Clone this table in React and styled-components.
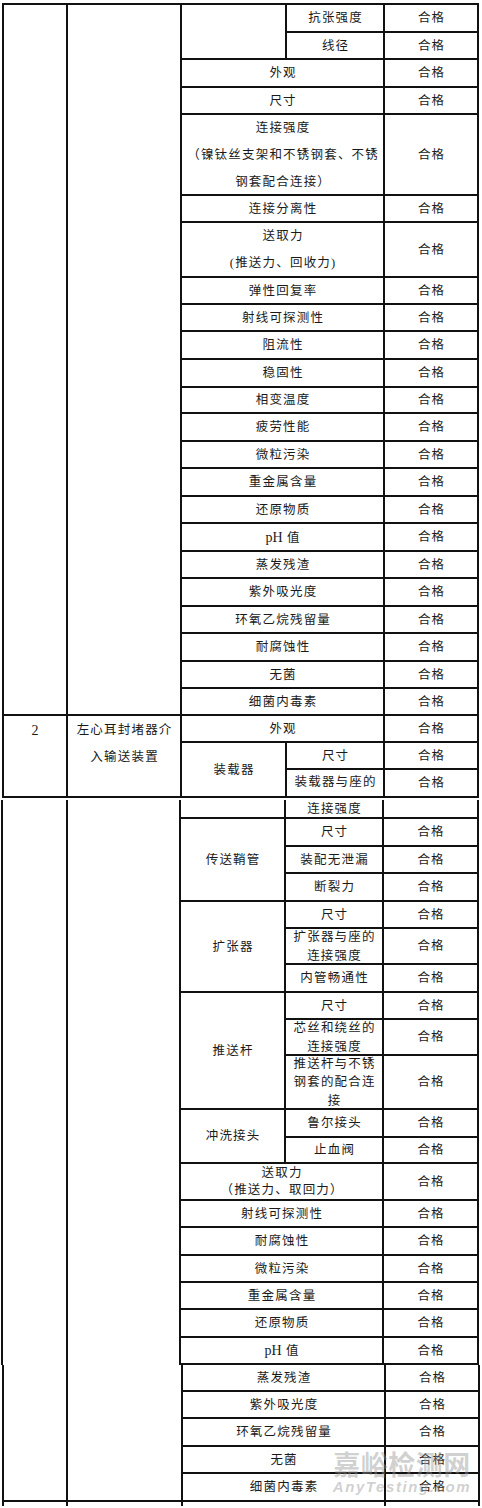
import React from 'react'
import styled, { createGlobalStyle } from 'styled-components'

const GlobalStyle = createGlobalStyle`
  html, body {
    margin: 0;
    padding: 0;
    background: #fff;
  }
  body {
    font-family: "Liberation Serif", "Noto Sans CJK SC", serif;
  }
`

const Page = styled.div`
  position: relative;
  width: 482px;
  height: 1508px;
  padding-top: 3px;
  box-sizing: border-box;
  overflow: hidden;
`

const Sheet = styled.div`
  display: grid;
  width: max-content;
  margin-left: ${p => p.$left}px;
  margin-top: ${p => p.$gap || 0}px;
  grid-template-columns: ${p => p.$cols.map(c => c + 'px').join(' ')};
  grid-template-rows: ${p => p.$rows.map(r => r + 'px').join(' ')};
  border-left: 2px solid #111;
  border-top: ${p => (p.$top ? '2px solid #111' : 'none')};
`

const Cell = styled.div`
  grid-column: ${p => p.$c} / span ${p => p.$cs || 1};
  grid-row: ${p => p.$r} / span ${p => p.$rs || 1};
  box-sizing: border-box;
  border-right: 2px solid #111;
  border-bottom: ${p => (p.$open ? 'none' : '2px solid #111')};
  display: flex;
  align-items: ${p => (p.$top ? 'flex-start' : 'center')};
  justify-content: center;
  min-width: 0;
  min-height: 0;
  overflow: hidden;
`

const Label = styled.span`
  display: block;
  text-align: center;
  font-size: 12.5px;
  letter-spacing: 1.2px;
  padding-left: 1.2px;
  padding-top: 1px;
  line-height: ${p => p.$lh || 27}px;
  color: #1a1a1a;
  white-space: nowrap;
`

const Latin = styled.span`
  font-family: "Liberation Serif", serif;
  font-size: 14px;
  letter-spacing: 0;
`

const Num = styled(Label)`
  font-size: 14px;
  letter-spacing: 0;
  padding-left: 0;
`

const Watermark = styled.div`
  position: absolute;
  left: 331px;
  top: 1448px;
  width: 142px;
  display: flex;
  flex-direction: column;
  align-items: center;
  pointer-events: none;
  color: rgba(150, 150, 150, 0.45);
`

const MarkCn = styled.div`
  font-family: "Noto Sans CJK SC", sans-serif;
  font-weight: 700;
  font-size: 27px;
  line-height: 31px;
  letter-spacing: 0.5px;
`

const MarkEn = styled.div`
  font-family: "Liberation Sans", Arial, sans-serif;
  font-style: italic;
  font-weight: 700;
  font-size: 15px;
  line-height: 16px;
  letter-spacing: 1.6px;
`

const T = ({ children, lh }) => <Label $lh={lh}>{children}</Label>

const PH = () => (
  <Label>
    <Latin>pH</Latin> 值
  </Label>
)

const pass = '合格'

const part1Rows = [28, 27, 28, 27, 81, 27, 55, 27, 27, 28, 28, 26, 28, 27, 28, 27, 28, 27, 28, 27, 28, 27, 27, 27, 27, 28]

const part1Items = [
  '外观', '尺寸', null, '连接分离性', null, '弹性回复率', '射线可探测性', '阻流性', '稳固性',
  '相变温度', '疲劳性能', '微粒污染', '重金属含量', '还原物质', 'pH', '蒸发残渣',
  '紫外吸光度', '环氧乙烷残留量', '耐腐蚀性', '无菌', '细菌内毒素',
]

const part2Rows = [19, 28, 27, 28, 27, 36, 28, 27, 36, 54, 28, 26, 37, 27, 28, 27, 27, 28, 27]

const part2Groups = [
  { name: '传送鞘管', start: 2, items: ['尺寸', '装配无泄漏', '断裂力'] },
  { name: '扩张器', start: 5, items: ['尺寸', ['扩张器与座的', '连接强度'], '内管畅通性'] },
  { name: '推送杆', start: 8, items: ['尺寸', ['芯丝和绕丝的', '连接强度'], ['推送杆与不锈', '钢套的配合连', '接']] },
  { name: '冲洗接头', start: 11, items: ['鲁尔接头', '止血阀'] },
]

const part2Tail = ['射线可探测性', '耐腐蚀性', '微粒污染', '重金属含量', '还原物质', 'pH']

const part3Items = ['蒸发残渣', '紫外吸光度', '环氧乙烷残留量', '无菌', '细菌内毒素']

const Lines = ({ lines, lh }) => (
  <Label $lh={lh}>
    {lines.map((l, i) => (
      <React.Fragment key={i}>
        {i > 0 && <br />}
        {l}
      </React.Fragment>
    ))}
  </Label>
)

const Item = ({ text }) => (text === 'pH' ? <PH /> : <T>{text}</T>)

const App = () => {
  return (
    <Page>
      <GlobalStyle />

      {/* first page fragment */}
      <Sheet $left={2} $top $cols={[64, 114, 105, 98, 94]} $rows={part1Rows}>
        <Cell $c={1} $r={1} $rs={23} />
        <Cell $c={2} $r={1} $rs={23} />
        <Cell $c={3} $r={1} $rs={2} />
        <Cell $c={4} $r={1}><T>抗张强度</T></Cell>
        <Cell $c={5} $r={1}><T>{pass}</T></Cell>
        <Cell $c={4} $r={2}><T>线径</T></Cell>
        <Cell $c={5} $r={2}><T>{pass}</T></Cell>

        {part1Items.map((item, i) => {
          const r = i + 3
          let content = <Item text={item} />
          if (r === 5) content = <Lines lines={['连接强度', '（镍钛丝支架和不锈钢套、不锈', '钢套配合连接）']} />
          if (r === 7) content = <Lines lines={['送取力', '(推送力、回收力)']} />
          return (
            <React.Fragment key={r}>
              <Cell $c={3} $cs={2} $r={r}>{content}</Cell>
              <Cell $c={5} $r={r}><T>{pass}</T></Cell>
            </React.Fragment>
          )
        })}

        <Cell $c={1} $r={24} $rs={3} $top><Num>2</Num></Cell>
        <Cell $c={2} $r={24} $rs={3} $top><Lines lines={['左心耳封堵器介', '入输送装置']} /></Cell>
        <Cell $c={3} $cs={2} $r={24}><T>外观</T></Cell>
        <Cell $c={5} $r={24}><T>{pass}</T></Cell>
        <Cell $c={3} $r={25} $rs={2}><T>装载器</T></Cell>
        <Cell $c={4} $r={25}><T>尺寸</T></Cell>
        <Cell $c={5} $r={25}><T>{pass}</T></Cell>
        <Cell $c={4} $r={26} $top><Label $lh={22}>装载器与座的</Label></Cell>
        <Cell $c={5} $r={26}><T>{pass}</T></Cell>
      </Sheet>

      {/* second page fragment */}
      <Sheet $left={1} $gap={2} $cols={[65, 113, 105, 98, 95]} $rows={part2Rows}>
        <Cell $c={1} $r={1} $rs={19} $open />
        <Cell $c={2} $r={1} $rs={19} $open />
        <Cell $c={3} $r={1} />
        <Cell $c={4} $r={1}><T lh={17}>连接强度</T></Cell>
        <Cell $c={5} $r={1} />

        {part2Groups.map(g => (
          <React.Fragment key={g.name}>
            <Cell $c={3} $r={g.start} $rs={g.items.length}><T>{g.name}</T></Cell>
            {g.items.map((it, i) => (
              <React.Fragment key={i}>
                <Cell $c={4} $r={g.start + i}>
                  {Array.isArray(it) ? <Lines lines={it} lh={18.5} /> : <T>{it}</T>}
                </Cell>
                <Cell $c={5} $r={g.start + i}><T>{pass}</T></Cell>
              </React.Fragment>
            ))}
          </React.Fragment>
        ))}

        <Cell $c={3} $cs={2} $r={13}><Lines lines={['送取力', '（推送力、取回力）']} lh={17} /></Cell>
        <Cell $c={5} $r={13}><T>{pass}</T></Cell>

        {part2Tail.map((item, i) => (
          <React.Fragment key={item}>
            <Cell $c={3} $cs={2} $r={14 + i}><Item text={item} /></Cell>
            <Cell $c={5} $r={14 + i}><T>{pass}</T></Cell>
          </React.Fragment>
        ))}
      </Sheet>

      {/* third page fragment */}
      <Sheet $left={2} $cols={[64, 115, 203, 94]} $rows={[27, 27, 28, 27, 28, 4]}>
        <Cell $c={1} $r={1} $rs={5} />
        <Cell $c={2} $r={1} $rs={5} />
        {part3Items.map((item, i) => (
          <React.Fragment key={item}>
            <Cell $c={3} $r={1 + i}><T>{item}</T></Cell>
            <Cell $c={4} $r={1 + i}><T>{pass}</T></Cell>
          </React.Fragment>
        ))}
        {[1, 2, 3, 4].map(c => (
          <Cell key={c} $c={c} $r={6} $open />
        ))}
      </Sheet>

      <Watermark>
        <MarkCn>嘉峪检测网</MarkCn>
        <MarkEn>AnyTesting.com</MarkEn>
      </Watermark>
    </Page>
  )
}

export default App
